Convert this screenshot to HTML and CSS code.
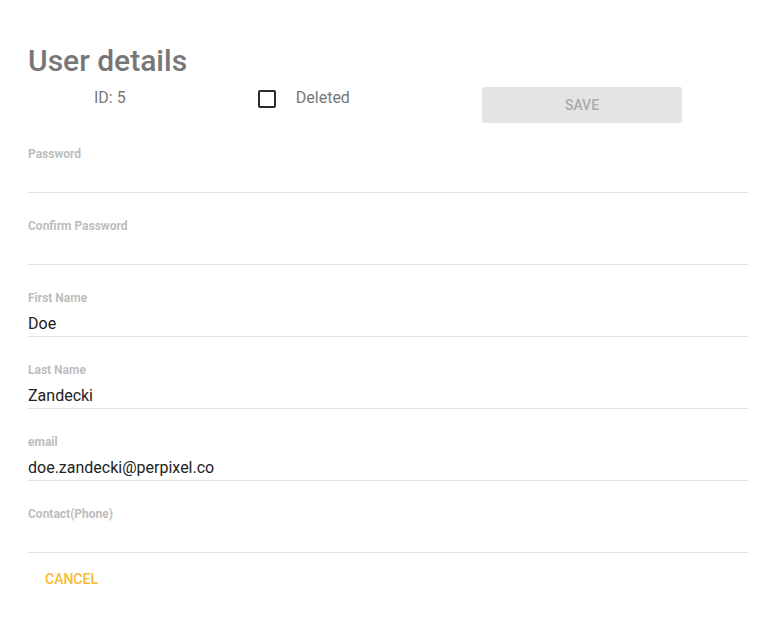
FILE: index.html
```html
<!DOCTYPE html>
<html>
<head>
<meta charset="utf-8">
<link rel="stylesheet" href="styles.css">
</head>
<body>
<div class="dialog">
  <h1 class="title">User details</h1>
  <div class="meta-row">
    <span class="id">ID: 5</span>
    <label class="check">
      <span class="box"></span>
      <span class="check-label">Deleted</span>
    </label>
    <button class="save" disabled>SAVE</button>
  </div>
  <div class="fields">
    <div class="field"><div class="label">Password</div><div class="input"></div></div>
    <div class="field"><div class="label">Confirm Password</div><div class="input"></div></div>
    <div class="field"><div class="label">First Name</div><div class="input">Doe</div></div>
    <div class="field"><div class="label">Last Name</div><div class="input">Zandecki</div></div>
    <div class="field"><div class="label">email</div><div class="input">doe.zandecki@perpixel.co</div></div>
    <div class="field"><div class="label">Contact(Phone)</div><div class="input"></div></div>
  </div>
  <div class="actions">
    <button class="cancel">CANCEL</button>
  </div>
</div>
</body>
</html>
```
FILE: styles.css
```css
* { box-sizing: border-box; }
html, body { margin: 0; padding: 0; background: #fff; }
body { font-family: Roboto, "Noto Sans", sans-serif; }
.dialog { padding: 45px 25px 0 28px; width: 773px; }
.title { margin: 0; font-size: 30px; line-height: 32px; font-weight: 500; color: #777; height: 32px; }
.meta-row { display: flex; justify-content: space-between; align-items: flex-start; margin-top: 10px; padding: 0 66px; height: 36px; }
.id { font-size: 16px; line-height: 22px; color: #777; }
.check { display: flex; align-items: flex-start; gap: 20px; }
.box { width: 18px; height: 18px; border: 2px solid #2a2a2a; border-radius: 2px; margin-top: 3px; }
.check-label { font-size: 16px; line-height: 22px; color: #777; }
.save { width: 200px; height: 36px; border: none; border-radius: 2px; background: #e4e4e4; color: #aaa; font-family: Roboto, sans-serif; font-weight: 500; font-size: 14px; padding: 0; }
.fields { margin-top: 23px; width: 720px; }
.field { margin-bottom: 25px; }
.label { font-size: 12px; line-height: 16px; font-weight: 700; color: #bdbdbd; }
.input { padding-top: 6px; height: 31px; line-height: 24px; font-size: 16px; color: #222; border-bottom: 1px solid #e0e0e0; }
.actions { margin-top: -17px; }
.cancel { background: none; border: none; font-family: Roboto, sans-serif; font-weight: 500; font-size: 14px; line-height: 24px; color: #fbb92c; padding: 6px 17px; }
```
